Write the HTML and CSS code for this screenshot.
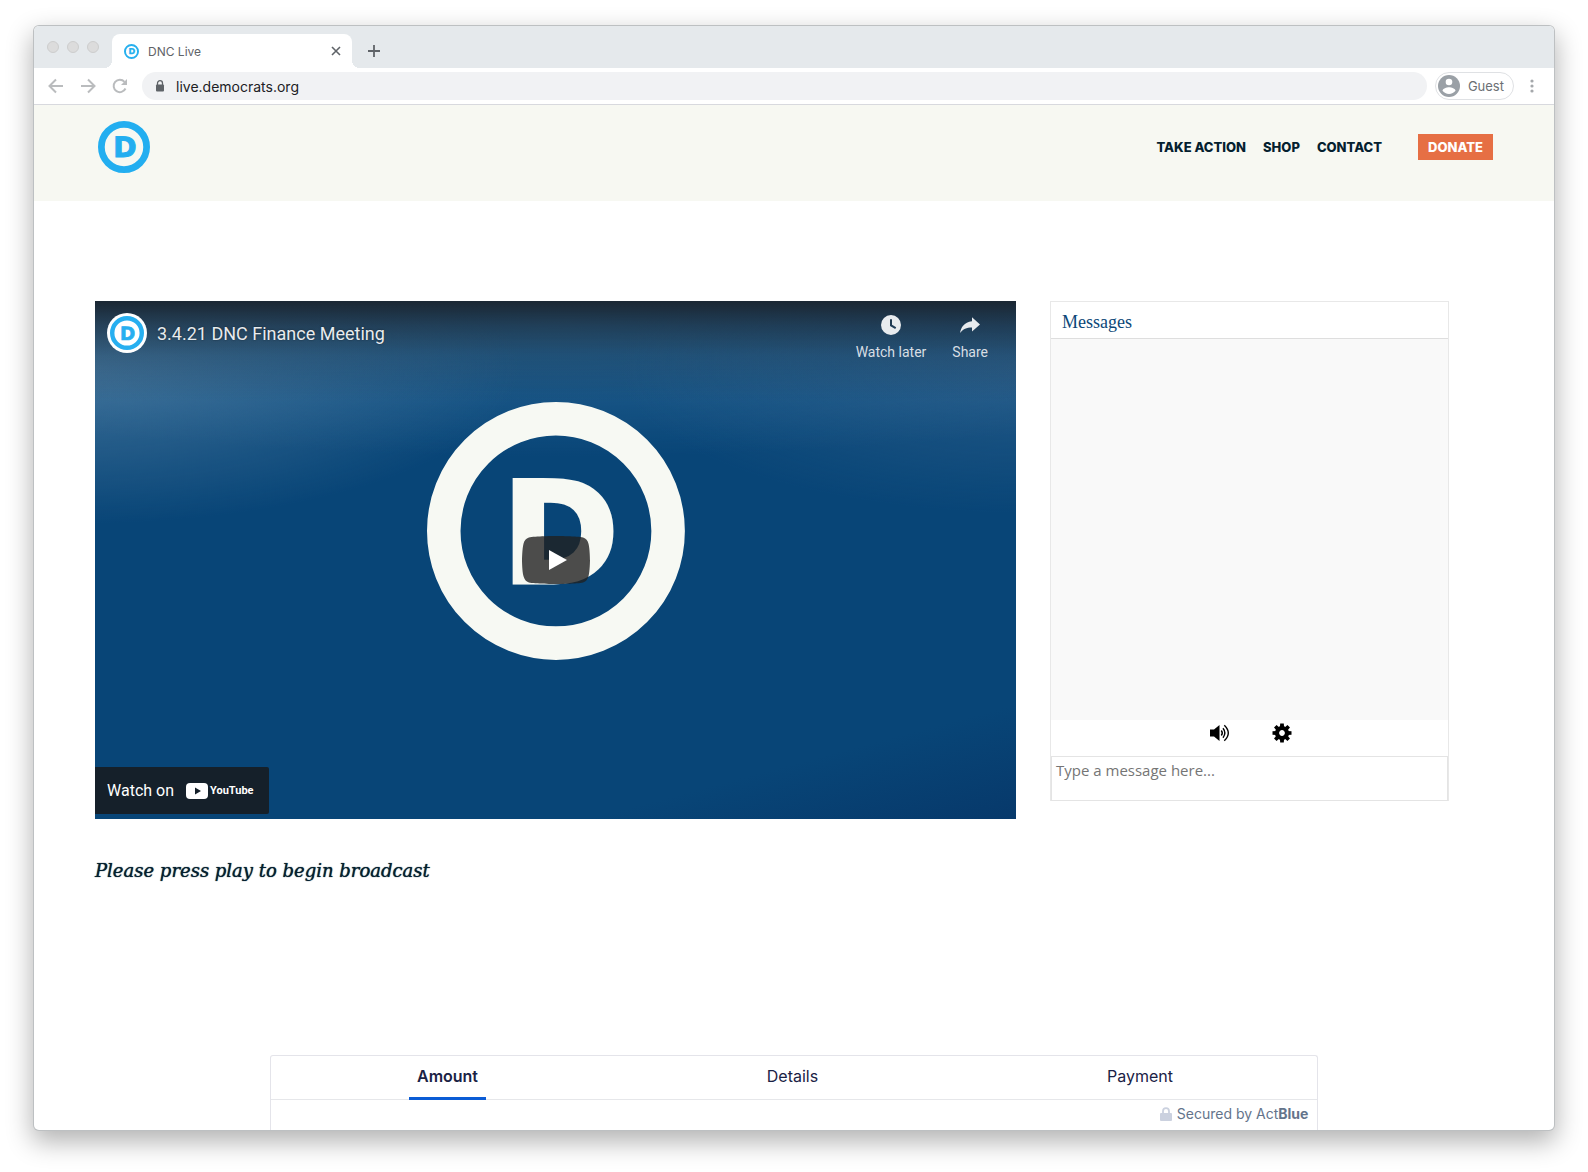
FILE: index.html
```html
<!DOCTYPE html>
<html lang="en">
<head>
<meta charset="utf-8">
<title>DNC Live</title>
<link rel="stylesheet" href="styles.css">
</head>
<body>
<svg class="defs" aria-hidden="true">
  <symbol id="logo" viewBox="0 0 100 100">
    <circle cx="50" cy="50" r="43.5" fill="none" stroke="currentColor" stroke-width="13"/>
    <text class="logo-letter" x="29.3" y="69.8">D</text>
  </symbol>
</svg>
<div class="window">
  <div class="tabstrip">
    <div class="lights"><span></span><span></span><span></span></div>
    <div class="tab">
      <svg class="favicon"><use href="#logo"/></svg>
      <span class="tab-title">DNC Live</span>
      <button class="icon-btn" aria-label="Close tab"><svg width="10" height="10" viewBox="0 0 10 10"><path d="M1 1l8 8M9 1l-8 8" stroke="#5f6368" stroke-width="1.6"/></svg></button>
    </div>
    <button class="icon-btn new-tab" aria-label="New tab"><svg width="12" height="12" viewBox="0 0 12 12"><path d="M6 0v12M0 6h12" stroke="#5f6368" stroke-width="1.8"/></svg></button>
  </div>
  <div class="toolbar">
    <button class="icon-btn" aria-label="Back"><svg width="16" height="16" viewBox="0 0 16 16"><path d="M15 8H2M8 1.5L1.500 8l6.500 6.500" fill="none" stroke="#babcbe" stroke-width="2"/></svg></button>
    <button class="icon-btn" aria-label="Forward"><svg width="16" height="16" viewBox="0 0 16 16"><path d="M1 8h13M8 1.500L14.500 8 8 14.500" fill="none" stroke="#babcbe" stroke-width="2"/></svg></button>
    <button class="icon-btn" aria-label="Reload"><svg width="16" height="16" viewBox="0 0 16 16"><path d="M13.500 10.500A6.200 6.200 0 1 1 12.500 3.800" fill="none" stroke="#babcbe" stroke-width="2"/><path d="M15 1v6H9z" fill="#babcbe"/></svg></button>
    <div class="address">
      <svg width="10" height="12" viewBox="0 0 10 12"><path d="M2.500 5V3.200a2.500 2.500 0 0 1 5 0V5" fill="none" stroke="#5f6368" stroke-width="1.300"/><rect x="1" y="4.500" width="8" height="7" rx="1" fill="#5f6368"/></svg>
      <input type="text" value="live.democrats.org" aria-label="Address">
    </div>
    <button class="guest"><svg width="22" height="22" viewBox="0 0 22 22"><circle cx="11" cy="11" r="11" fill="#9aa0a6"/><circle cx="11" cy="7" r="3.300" fill="#fff"/><path d="M4.500 15.800c0-2.300 4.200-3.500 6.500-3.500s6.500 1.200 6.500 3.500c-1.400 2-3.900 3.200-6.500 3.200s-5.100-1.200-6.500-3.200z" fill="#fff"/></svg>Guest</button>
    <button class="icon-btn" aria-label="Menu"><svg width="4" height="14" viewBox="0 0 4 14"><g fill="#a5a8ab"><circle cx="2" cy="2" r="1.600"/><circle cx="2" cy="7" r="1.600"/><circle cx="2" cy="12" r="1.600"/></g></svg></button>
  </div>

  <header class="site-header">
    <a href="#" aria-label="Democrats home"><svg class="site-logo"><use href="#logo"/></svg></a>
    <nav class="site-nav">
      <a href="#">TAKE ACTION</a>
      <a href="#">SHOP</a>
      <a href="#">CONTACT</a>
      <a href="#" class="donate">DONATE</a>
    </nav>
  </header>

  <main class="content">
    <div class="stream">
      <section class="video-col">
        <div class="player">
          <svg class="poster-logo"><use href="#logo"/></svg>
          <div class="player-top">
            <span class="channel"><svg class="channel-logo"><use href="#logo"/></svg></span>
            <a href="#" class="video-title">3.4.21 DNC Finance Meeting</a>
            <button class="player-action"><svg width="24" height="24" viewBox="0 0 24 24"><path fill-rule="evenodd" d="M12 2a10 10 0 1 0 0 20 10 10 0 0 0 0-20zM11 6.200h2v5.600l4.200 2.400-1 1.700L11 13z" fill="#e8ebee"/></svg>Watch later</button>
            <button class="player-action"><svg width="24" height="24" viewBox="0 0 24 24"><path d="M14 4.200V8.300C6 9.300 3 14.500 2 20c3-4 6.500-5.600 12-5.600v4.200L22 11.400z" fill="#e8ebee"/></svg>Share</button>
          </div>
          <button class="play" aria-label="Play"><svg width="68" height="48" viewBox="0 0 68 48"><path d="M66.500 7.700c-.8-2.900-2.500-5.400-5.400-6.200C55.800.1 34 0 34 0S12.200.1 6.900 1.500C4 2.300 2.300 4.800 1.500 7.700.1 13 0 24 0 24s.1 11 1.500 16.300c.8 2.900 2.500 5.400 5.400 6.200C12.200 47.900 34 48 34 48s21.800-.1 27.100-1.500c2.900-.8 4.600-3.300 5.400-6.200C67.900 35 68 24 68 24s-.1-11-1.500-16.300z" fill="#212121" fill-opacity=".8"/><path d="M45 24L27 14v20z" fill="#fff"/></svg></button>
          <a href="#" class="watch-on"><span>Watch on</span><span class="yt"><svg width="22" height="16" viewBox="0 0 22 16"><rect width="22" height="16" rx="4" fill="#fff"/><path d="M9 4.600l6 3.400-6 3.400z" fill="#15202a"/></svg><b>YouTube</b></span></a>
        </div>
        <p class="hint">Please press play to begin broadcast</p>
      </section>
      <aside class="chat">
        <h2>Messages</h2>
        <div class="chat-log"></div>
        <div class="chat-tools">
          <button class="icon-btn" aria-label="Sound"><svg width="21" height="18" viewBox="0 0 21 18"><path d="M0 5.500h4L9.500 1v16L4 12.500H0z"/><path d="M11.300 6.500q2 2.500 0 5M13 4.300q3.700 4.700 0 9.400M14.300 1.200q8 7.800 0 15.600" fill="none" stroke="#000" stroke-width="1.400"/></svg></button>
          <button class="icon-btn" aria-label="Settings"><svg width="20" height="20" viewBox="0 0 20 20"><g transform="translate(10 10)"><circle r="5" fill="none" stroke="#000" stroke-width="4.200"/><path id="tooth" d="M-1.800-9.500h3.600l.3 4h-4.200zM-1.800 9.500h3.600l.3-4h-4.200z"/><use href="#tooth" transform="rotate(45)"/><use href="#tooth" transform="rotate(90)"/><use href="#tooth" transform="rotate(135)"/></g></svg></button>
        </div>
        <textarea placeholder="Type a message here..." aria-label="Message"></textarea>
      </aside>
    </div>

    <section class="donation">
      <div class="steps">
        <button class="step active">Amount</button>
        <button class="step">Details</button>
        <button class="step">Payment</button>
      </div>
      <p class="secured"><svg width="12" height="14" viewBox="0 0 12 14"><path d="M3 6V4.200a3 3 0 0 1 6 0V6" fill="none" stroke="#cbd1df" stroke-width="1.800"/><rect y="6" width="12" height="8" rx="1" fill="#cbd1df"/></svg><span>Secured by Act<b>Blue</b></span></p>
    </section>
  </main>
</div>
</body>
</html>
```

FILE: styles.css
```css
* { box-sizing: border-box; }

body {
  margin: 0;
  height: 100vh;
  padding: 26px 34px 42px;
  display: flex;
  background: #fff;
  font-family: Roboto, "Liberation Sans", sans-serif;
}

button { font: inherit; border: 0; padding: 0; background: none; cursor: pointer; }
a { text-decoration: none; color: inherit; }
svg { display: block; flex: none; }
.defs { display: none; }
.logo-letter {
  font: 700 54px "DejaVu Sans", sans-serif;
  text-rendering: geometricPrecision;
  fill: currentColor;
  stroke: currentColor;
  stroke-width: 2px;
}

.window {
  flex: 1;
  min-width: 0;
  display: flex;
  flex-direction: column;
  overflow: hidden;
  border-radius: 5px;
  background: #fff;
  box-shadow: 0 0 0 1px #bdc0c2, 0 10px 26px 2px rgba(0, 0, 0, .3);
}

/* Browser chrome */
.tabstrip, .toolbar { font-family: Inter, sans-serif; }
.tabstrip {
  flex: none;
  height: 42px;
  padding: 8px 0 0 13px;
  display: flex;
  background: #e5e9ec;
}
.lights { display: flex; gap: 8px; padding-top: 7px; width: 65px; }
.lights span {
  width: 12px;
  height: 12px;
  border-radius: 50%;
  background: #dcdcdc;
  border: 1px solid #cdcdcd;
}
.tab {
  position: relative;
  width: 240px;
  padding: 0 11px 0 12px;
  display: flex;
  align-items: center;
  gap: 9px;
  border-radius: 8px 8px 0 0;
  background: #fff;
}
.tab::before, .tab::after {
  content: "";
  position: absolute;
  bottom: 0;
  width: 8px;
  height: 8px;
}
.tab::before { left: -8px; background: radial-gradient(circle at 0 0, transparent 8px, #fff 8px); }
.tab::after { right: -8px; background: radial-gradient(circle at 100% 0, transparent 8px, #fff 8px); }
.favicon { width: 15px; height: 15px; color: #27b0ee; }
.tab-title { flex: 1; font-size: 12px; color: #5f6368; }
.icon-btn { display: flex; align-items: center; justify-content: center; }
.new-tab { margin-left: 16px; }
.toolbar {
  flex: none;
  height: 37px;
  padding: 0 20px 0 14px;
  display: flex;
  align-items: center;
  gap: 16px;
  border-bottom: 1px solid #d8d9de;
}
.address {
  flex: 1;
  margin: 0 -8px 0 -2px;
  height: 28px;
  padding-left: 13px;
  display: flex;
  align-items: center;
  gap: 11px;
  border-radius: 14px;
  background: #f1f2f4;
}
.address input {
  flex: 1;
  border: 0;
  padding: 0;
  background: none;
  font: 14px Inter, sans-serif;
  color: #202124;
  outline: 0;
}
.guest {
  height: 28px;
  padding: 0 9px 0 2px;
  display: flex;
  align-items: center;
  gap: 8px;
  border: 1px solid #dfe1e4;
  border-radius: 14px;
  font-size: 13px;
  color: #6b6f74;
}

/* Site header */
.site-header {
  flex: none;
  padding: 16px 61px 28px 64px;
  display: flex;
  align-items: center;
  justify-content: space-between;
  background: #f7f8f2;
}
.site-logo { width: 52px; height: 52px; color: #23aef0; }
.site-nav {
  display: flex;
  align-items: center;
  gap: 17px;
  font: 800 13px/26px Inter, sans-serif;
  color: #04202f;
}
.donate { margin-left: 19px; padding: 0 10px; background: #e66f44; color: #fff; }

/* Stream and chat */
.content {
  flex: 1;
  min-height: 0;
  display: flex;
  flex-direction: column;
  padding-top: 100px;
}
.stream {
  flex: none;
  display: grid;
  grid-template-columns: 921fr 399fr;
  gap: 34px;
  align-items: start;
  padding: 0 105px 0 61px;
}
.player {
  position: relative;
  aspect-ratio: 16 / 9;
  overflow: hidden;
  background:
    linear-gradient(#1b2733 0, rgba(27, 39, 51, .62) 24px, rgba(27, 39, 51, .25) 54px, transparent 100px),
    radial-gradient(ellipse 48% 30% at -2% 13%, rgba(90, 135, 170, .65), transparent),
    radial-gradient(ellipse 45% 28% at 102% 13%, rgba(70, 115, 155, .45), transparent),
    radial-gradient(ellipse 90% 26% at 50% 4%, rgba(60, 120, 165, .65), transparent),
    linear-gradient(165deg, #084577 85%, #07396b);
}
.poster-logo {
  position: absolute;
  width: 28%;
  aspect-ratio: 1;
  height: auto;
  left: 36%;
  top: 19.5%;
  overflow: visible;
  color: #f7f9f3;
}
.player-top {
  position: relative;
  display: flex;
  align-items: flex-start;
  padding: 12px 28px 0 12px;
  color: #e8ebee;
}
.channel { padding: 3px; border-radius: 50%; background: #fff; color: #27aff0; }
.channel-logo { width: 34px; height: 34px; }
.video-title { flex: 1; padding-left: 10px; font-size: 18px; line-height: 42px; text-shadow: 0 0 2px rgba(0, 0, 0, .5); }
.player-action {
  display: flex;
  flex-direction: column;
  align-items: center;
  gap: 8px;
  margin-left: 26px;
  font-size: 14px;
  line-height: 14px;
  color: #d8dee4;
}
.play { position: absolute; inset: 0; margin: auto; width: 68px; height: 48px; }
.watch-on {
  position: absolute;
  left: 0;
  bottom: 5px;
  height: 47px;
  padding: 0 15px 0 12px;
  display: flex;
  align-items: center;
  gap: 12px;
  border-radius: 0 2px 2px 0;
  background: #15202a;
  color: #fff;
  font-size: 16px;
}
.yt { display: flex; align-items: center; gap: 2px; font-size: 11px; line-height: 16px; }
.hint {
  margin: 38px 0 0;
  font: italic 18px/28px "DejaVu Serif", serif;
  color: #04202f;
  text-shadow: 0 0 1px #04202f;
}

.chat { border: 1px solid #e8e8e8; border-bottom: 0; }
.chat h2 {
  margin: 0;
  padding: 6px 11px 0;
  height: 37px;
  font: 18px/28px "Liberation Serif", serif;
  color: #0b4778;
  border-bottom: 1px solid #dedede;
}
.chat-log { height: 381px; background: #f9f9f9; }
.chat-tools {
  height: 36px;
  padding: 0 0 10px 3px;
  display: flex;
  align-items: center;
  justify-content: center;
  gap: 41px;
}
.chat textarea {
  display: block;
  width: 100%;
  height: 45px;
  padding: 3px 4px;
  resize: none;
  border: 1px solid #e4e4e4;
  font: 15px/20px "Open Sans", sans-serif;
}
.chat textarea::placeholder { color: #757575; }

/* Donation form */
.donation {
  flex: 1;
  align-self: center;
  width: 69%;
  margin-top: 170px;
  border: 1px solid #e4e4ea;
  border-bottom: 0;
  border-radius: 3px 3px 0 0;
  font-family: Inter, sans-serif;
}
.steps {
  height: 44px;
  padding-left: 2px;
  display: flex;
  justify-content: space-around;
  border-bottom: 1px solid #e6e7ea;
}
.step {
  height: 44px;
  padding: 0 8px 2px;
  border-bottom: 3px solid transparent;
  font-size: 16px;
  color: #1a2245;
}
.step.active { border-color: #0b5cd5; font-weight: 600; }
.secured {
  margin: 0;
  padding: 4px 9px 0;
  display: flex;
  align-items: center;
  justify-content: flex-end;
  gap: 5px;
  font-size: 14px;
  line-height: 20px;
  color: #64748b;
}
```
